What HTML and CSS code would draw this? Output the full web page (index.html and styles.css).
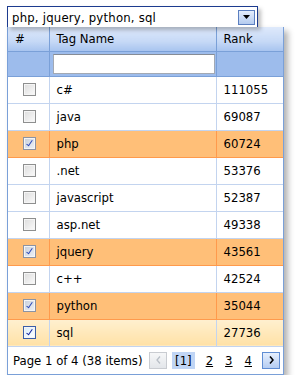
FILE: index.html
```html
<!DOCTYPE html>
<html lang="en">
<head>
    <meta charset="UTF-8">
    <title>Tag Picker</title>
    <link rel="stylesheet" href="styles.css">
</head>
<body>

    <!-- Combo box -->
    <div class="combo">
        <div class="combo-text">php, jquery, python, sql</div>
        <div class="combo-btn">
            <svg width="7" height="4" viewBox="0 0 7 4"><path d="M0 0h7L3.5 4z" fill="#000"/></svg>
        </div>
    </div>

    <!-- Drop down grid -->
    <div class="dropdown">
        <table class="grid">
            <thead>
                <tr class="head">
                    <th class="col-check">#</th>
                    <th class="col-name">Tag Name</th>
                    <th class="col-rank">Rank</th>
                </tr>
                <tr class="filter">
                    <td></td>
                    <td><input type="text" class="filter-input"></td>
                    <td></td>
                </tr>
            </thead>
            <tbody>
                <tr><td><span class="check"></span></td><td>c#</td><td>111055</td></tr>
                <tr><td><span class="check"></span></td><td>java</td><td>69087</td></tr>
                <tr class="selected"><td><span class="check on"></span></td><td>php</td><td>60724</td></tr>
                <tr><td><span class="check"></span></td><td>.net</td><td>53376</td></tr>
                <tr><td><span class="check"></span></td><td>javascript</td><td>52387</td></tr>
                <tr><td><span class="check"></span></td><td>asp.net</td><td>49338</td></tr>
                <tr class="selected"><td><span class="check on"></span></td><td>jquery</td><td>43561</td></tr>
                <tr><td><span class="check"></span></td><td>c++</td><td>42524</td></tr>
                <tr class="selected"><td><span class="check on"></span></td><td>python</td><td>35044</td></tr>
                <tr class="focused"><td><span class="check on"></span></td><td>sql</td><td>27736</td></tr>
            </tbody>
        </table>

        <!-- Pager -->
        <div class="pager">
            <span class="pager-summary">Page 1 of 4 (38 items)</span>
            <div class="pager-nav">
                <span class="pager-btn disabled">
                    <svg width="5" height="8" viewBox="0 0 5 8"><path d="M4 0.5L1 4l3 3.5" fill="none" stroke="#b8bec6" stroke-width="1.3"/></svg>
                </span>
                <span class="pager-page current">[1]</span>
                <a class="pager-page" href="#">2</a>
                <a class="pager-page" href="#">3</a>
                <a class="pager-page last" href="#">4</a>
                <span class="pager-btn">
                    <svg width="5" height="8" viewBox="0 0 5 8"><path d="M1 0.5L4 4l-3 3.5" fill="none" stroke="#000" stroke-width="1.5"/></svg>
                </span>
            </div>
        </div>
    </div>

</body>
</html>
```

FILE: styles.css
```css
/* Reset & Global Styles */
* {
    margin: 0;
    padding: 0;
    box-sizing: border-box;
}

body {
    background: #fff;
    color: #000;
    font-family: "DejaVu Sans Condensed", "DejaVu Sans", sans-serif;
    font-size: 13px;
}

/* Combo Box */
.combo {
    display: flex;
    align-items: center;
    width: 251px;
    height: 21px;
    margin: 6px 0 0 7px;
    border: 1px solid #1c3b8f;
    border-bottom: none;
    background: #fff;
    box-shadow: 3px 3px 4px rgba(0, 0, 0, 0.25);
    position: relative;
    z-index: 2;
}

.combo-text {
    flex: 1;
    padding-left: 4px;
    letter-spacing: 0.2px;
}

.combo-btn {
    width: 17px;
    height: 15px;
    margin-right: 2px;
    border: 1px solid #5b7fc0;
    background: linear-gradient(#e4edfc, #b4cbef);
    display: flex;
    align-items: center;
    justify-content: center;
}

/* Drop Down */
.dropdown {
    width: 277px;
    margin-left: 7px;
    border: 1px solid #7aa0d8;
    border-top: none;
    box-shadow: 4px 4px 6px rgba(0, 0, 0, 0.3);
    background: #fff;
    position: relative;
    z-index: 1;
}

/* Grid */
.grid {
    width: 100%;
    border-collapse: collapse;
    table-layout: fixed;
}

.grid th,
.grid td {
    text-align: left;
    font-weight: normal;
    white-space: nowrap;
}

.col-check { width: 41px; }
.col-name { width: 167px; }

.head th {
    height: 24px;
    padding: 0 7px;
    background: linear-gradient(#dee9fb, #c6d9f6 60%, #a8c4ef);
    border-right: 1px solid #7aa0d8;
    border-bottom: 1px solid #7aa0d8;
}

.head th:last-child {
    border-right: none;
}

.filter td {
    height: 25px;
    background: #9dbcec;
    border-right: 1px solid #7aa0d8;
    border-bottom: 1px solid #7aa0d8;
    padding: 0 3px;
}

.filter td:last-child {
    border-right: none;
}

.filter-input {
    display: block;
    width: 162px;
    height: 20px;
    border: 1px solid #a3a9b3;
    border-top-color: #868c96;
    background: #fff;
}

tbody td {
    height: 27px;
    padding: 0 7px;
    border-right: 1px solid #c3d4ef;
    border-bottom: 1px solid #c3d4ef;
}

tbody td:last-child {
    border-right: none;
}

tbody td:first-child {
    padding-left: 15px;
}

tbody tr.selected td {
    background: #ffbf78;
    border-right-color: #ff9a4c;
    border-bottom-color: #ff9a4c;
}

tbody tr.selected td:last-child {
    border-right: none;
}

tbody tr.focused td {
    background: linear-gradient(#fff0d0, #ffe1a6);
    border-right-color: #c3d4ef;
    border-bottom-color: #c3d4ef;
}

tbody tr.focused td:last-child {
    border-right: none;
}

/* Check Boxes */
.check {
    display: block;
    width: 13px;
    height: 13px;
    border: 1px solid #8e8f8f;
    background: linear-gradient(135deg, #dcdcdc, #fbfbfb);
    box-shadow: inset 0 0 0 1px #f5f5f5;
    position: relative;
}

.check.on::after {
    content: "";
    position: absolute;
    left: 4px;
    top: 1px;
    width: 2px;
    height: 6px;
    border-right: 1.5px solid #2a47b8;
    border-bottom: 1.5px solid #2a47b8;
    transform: rotate(35deg);
}

tbody tr.selected .check {
    background: linear-gradient(135deg, #c8cfdb, #eef1f6);
    border-color: #8b93a4;
}

tbody tr.focused .check {
    background: linear-gradient(135deg, #d8ecfb, #ffffff);
    border-color: #3a5ea8;
}

tbody tr.focused .check.on::after {
    border-color: #0f1f9a;
}

/* Pager */
.pager {
    display: flex;
    align-items: center;
    justify-content: space-between;
    height: 27px;
    padding: 0 3px 0 5px;
    white-space: nowrap;
}

.pager-nav {
    display: flex;
    align-items: center;
    gap: 4px;
}

.pager-btn {
    width: 18px;
    height: 17px;
    display: flex;
    align-items: center;
    justify-content: center;
    border: 1px solid #5f8dd3;
    background: linear-gradient(#e6effd, #b5cdf2);
}

.pager-btn.disabled {
    border-color: #c9ccd1;
    background: linear-gradient(#f6f7f8, #e3e6ea);
    margin-right: 1px;
}

.pager-page {
    color: #000;
    padding: 0 4px;
    line-height: 17px;
}

.pager-page.current {
    background: #c0d5f5;
    padding: 0 3px;
    margin-right: 3px;
    text-decoration: none;
}

.pager-page.last {
    margin-right: 2px;
}
```
